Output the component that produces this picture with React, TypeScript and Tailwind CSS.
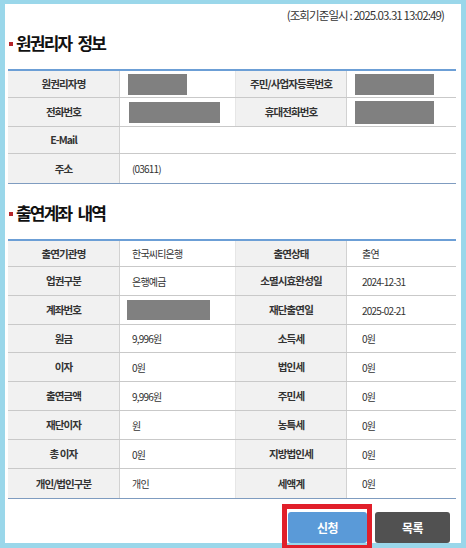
import React from "react";

const FONT = { fontFamily: '"Noto Sans CJK KR", "Noto Sans", sans-serif' };

function Redact({ w }: { w: string }) {
  return <div className={`bg-[#808080] h-[21px] ${w}`} />;
}

function Label({ children }: { children: React.ReactNode }) {
  return (
    <div className="flex items-center justify-center bg-[#f1f1f1] border-r border-[#d2d2d2] text-[10.5px] font-bold text-[#333] tracking-[-0.9px]">
      {children}
    </div>
  );
}

function Value({ children, right, span }: { children?: React.ReactNode; right?: boolean; span?: boolean }) {
  return (
    <div
      className={`flex items-center text-[10px] text-[#333] tracking-[-0.8px] ${right ? "pl-[15px]" : "pl-3 border-r border-[#e6e6e6]"} ${span ? "col-span-3 border-r-0" : ""}`}
    >
      {children}
    </div>
  );
}

function Heading({ a, b }: { a: string; b: string }) {
  return (
    <div className="flex items-center h-[24px]">
      <span className="w-[4px] h-[4px] bg-[#b5252a] ml-[1px] mr-[3px] mt-[1px]" />
      <span className="text-[17px] font-bold text-[#111] tracking-[-1.8px] leading-[24px]">{a}</span>
      <span className="w-[6px]" />
      <span className="text-[17px] font-bold text-[#111] tracking-[-1.8px] leading-[24px]">{b}</span>
    </div>
  );
}

type Row = { h: string; cells: React.ReactNode };

export default function App() {
  const rows1: Row[] = [
    {
      h: "h-[27px]",
      cells: (
        <>
          <Label>원권리자명</Label>
          <Value>
            <div className="-ml-[4px]"><Redact w="w-[59px]" /></div>
          </Value>
          <Label>주민/사업자등록번호</Label>
          <Value right>
            <div className="-ml-[7px]"><Redact w="w-[79px]" /></div>
          </Value>
        </>
      ),
    },
    {
      h: "h-[29px]",
      cells: (
        <>
          <Label>전화번호</Label>
          <Value>
            <div className="-ml-[3px]"><Redact w="w-[91px]" /></div>
          </Value>
          <Label>휴대전화번호</Label>
          <Value right>
            <div className="-ml-[7px]"><div className="bg-[#808080] h-[23px] w-[79px]" /></div>
          </Value>
        </>
      ),
    },
    {
      h: "h-[27px]",
      cells: (
        <>
          <Label>E-Mail</Label>
          <Value span />
        </>
      ),
    },
    {
      h: "h-[29px]",
      cells: (
        <>
          <Label>주소</Label>
          <Value span>(03611)</Value>
        </>
      ),
    },
  ];

  const data2: [string, React.ReactNode, string, string][] = [
    ["출연기관명", "한국씨티은행", "출연상태", "출연"],
    ["업권구분", "은행예금", "소멸시효완성일", "2024-12-31"],
    ["계좌번호", "__redact__", "재단출연일", "2025-02-21"],
    ["원금", "9,996원", "소득세", "0원"],
    ["이자", "0원", "법인세", "0원"],
    ["출연금액", "9,996원", "주민세", "0원"],
    ["재단이자", "원", "농특세", "0원"],
    ["총 이자", "0원", "지방법인세", "0원"],
    ["개인/법인구분", "개인", "세액계", "0원"],
  ];
  const heights2 = [
    "h-[26px]",
    "h-[29px]",
    "h-[29px]",
    "h-[28px]",
    "h-[29px]",
    "h-[29px]",
    "h-[29px]",
    "h-[29px]",
    "h-[29px]",
  ];

  return (
    <div className="w-[466px] h-[548px] bg-[#9ad7ea] pt-[4px] px-[5px] pb-[5px]" style={FONT}>
      <div className="relative w-full h-full bg-white pl-[3px] pr-[5px] flex flex-col">
        <div className="pt-[4px] h-[18px] flex justify-end pr-[12px]">
          <span className="text-[11.5px] leading-[14px] text-[#333] tracking-[-0.9px]">(조회기준일시 : 2025.03.31 13:02:49)</span>
        </div>

        <div className="mt-[9px]">
          <Heading a="원권리자" b="정보" />
        </div>

        <div className="mt-[14px] border-t-2 border-[#6c9fd6] border-b border-b-[#7f9cc0]">
          {rows1.map((r, i) => (
            <div
              key={i}
              className={`grid grid-cols-[112px_116px_111px_1fr] ${r.h} ${i < rows1.length - 1 ? "border-b border-[#c9c9c9]" : ""}`}
            >
              {r.cells}
            </div>
          ))}
        </div>

        <div className="mt-[17px]">
          <Heading a="출연계좌" b="내역" />
        </div>

        <div className="mt-[14px] border-t-2 border-[#6c9fd6] border-b border-b-[#7f9cc0]">
          {data2.map((d, i) => (
            <div
              key={i}
              className={`grid grid-cols-[112px_116px_111px_1fr] ${heights2[i]} ${i < data2.length - 1 ? "border-b border-[#c9c9c9]" : ""}`}
            >
              <Label>{d[0]}</Label>
              <Value>
                {d[1] === "__redact__" ? (
                  <div className="-ml-[5px]"><div className="bg-[#808080] h-[20px] w-[83px]" /></div>
                ) : (
                  d[1]
                )}
              </Value>
              <Label>{d[2]}</Label>
              <Value right>{d[3]}</Value>
            </div>
          ))}
        </div>

        <div className="mt-auto flex justify-end gap-[8px] pr-[6px]">
          <div className="relative">
            <button className="w-[79px] h-[31px] rounded-[3px] bg-[#5a9ad8] text-white text-[12px] font-bold tracking-[-0.5px]">
              신청
            </button>
            <span className="absolute -left-[6px] -right-[5px] -top-[8px] -bottom-[7px] border-[5px] border-[#e11f2a] pointer-events-none" />
          </div>
          <button className="w-[75px] h-[31px] rounded-[3px] bg-[#515151] text-white text-[12px] font-bold tracking-[-0.5px]">
            목록
          </button>
        </div>
      </div>
    </div>
  );
}
